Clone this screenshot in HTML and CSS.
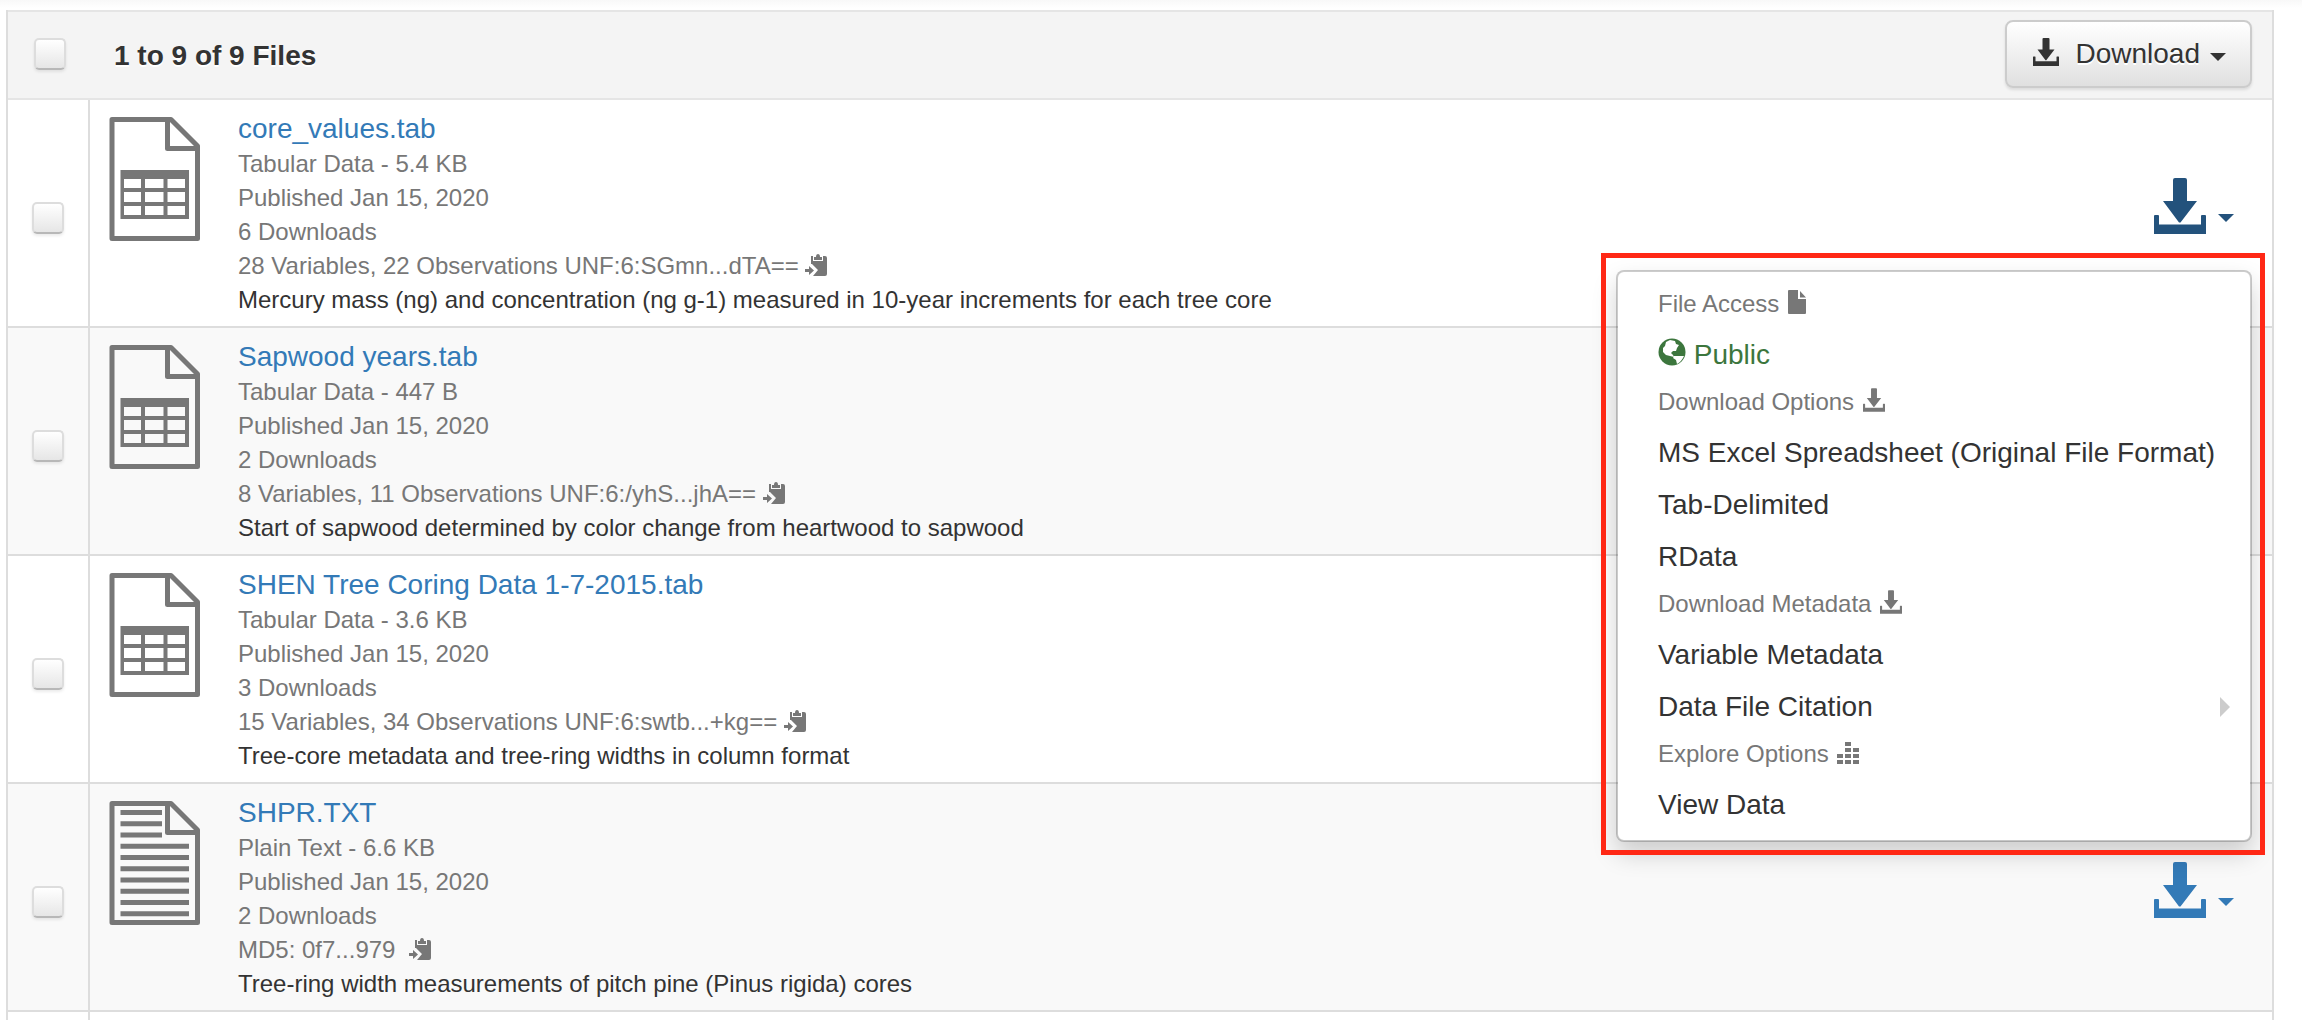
FILE: index.html
```
<!DOCTYPE html>
<html lang="en">
<head>
<meta charset="utf-8">
<title>Dataset files</title>
<link rel="stylesheet" href="styles.css">
</head>
<body>
<svg class="sprite" aria-hidden="true">
  <symbol id="page" viewBox="0 0 94 126">
    <path fill="none" stroke="currentColor" stroke-width="5" stroke-linejoin="round" d="M4 3.500H63L89.500 30V122.500H4ZM59.500 3.500V32.500H89.500"/>
  </symbol>
  <symbol id="tabular" viewBox="0 0 94 126">
    <use href="#page"/>
    <path fill="currentColor" fill-rule="evenodd" d="M12.500 54H81V103H12.500ZM16 63V72H33V63ZM37 63V72H55.500V63ZM59.500 63V72H77V63ZM16 76V86H33V76ZM37 76V86H55.500V76ZM59.500 76V86H77V76ZM16 90V99H33V90ZM37 90V99H55.500V90ZM59.500 90V99H77V90Z"/>
  </symbol>
  <symbol id="text" viewBox="0 0 94 126">
    <use href="#page"/>
    <path fill="none" stroke="currentColor" stroke-width="5" d="M12.500 12.500H54M12.500 23.800H54M12.500 35H54M12.500 46.300H81M12.500 57.500H81M12.500 68.800H81M12.500 80H81M12.500 91.300H81M12.500 102.500H81M12.500 113.800H81"/>
  </symbol>
  <symbol id="save" viewBox="0 0 52 56">
    <path fill="currentColor" d="M21 0H31Q33 0 33 2V23H43L26.500 44.500H25L9 23H19V2Q19 0 21 0ZM1 37H4Q5 37 5 38V46.500H47V38Q47 37 48 37H51Q52 37 52 38V56H0V38Q0 37 1 37Z"/>
  </symbol>
  <symbol id="copy" viewBox="0 0 22 24">
    <path fill="currentColor" d="M6 3H8V8H18V3H20Q22 3 22 5V21Q22 23 20 23H8L13 17L7 11H6ZM9 4H11Q11 1 13 1Q15 1 15 4H17V7H9ZM0 16H4V13L9 17.500L4 22V19H0Z"/>
  </symbol>
</svg>

<main class="files">
  <table class="file-table">
    <thead>
      <tr>
        <th class="check"><input type="checkbox" aria-label="Select all files"></th>
        <th class="count">1 to 9 of 9 Files</th>
        <th class="bulk"><button class="download" type="button"><svg class="icon-download"><use href="#save"/></svg>Download<span class="caret"></span></button></th>
      </tr>
    </thead>
    <tbody>
      <tr>
        <td class="check"><input type="checkbox" aria-label="Select core_values.tab"></td>
        <td class="file"><div class="entry">
          <svg class="thumb"><use href="#tabular"/></svg>
          <div class="info">
            <a class="name" href="#core">core_values.tab</a>
            <p>Tabular Data - 5.4 KB</p>
            <p>Published Jan 15, 2020</p>
            <p>6 Downloads</p>
            <p>28 Variables, 22 Observations UNF:6:SGmn...dTA== <svg class="icon-copy"><use href="#copy"/></svg></p>
            <p class="note">Mercury mass (ng) and concentration (ng g-1) measured in 10-year increments for each tree core</p>
          </div>
        </div></td>
        <td class="action"><div class="access">
          <button class="open" type="button" aria-label="Access core_values.tab" aria-expanded="true"><svg class="icon-save"><use href="#save"/></svg><span class="caret"></span></button>
          <ul class="menu">
            <li class="heading">File Access <svg class="icon-file" viewBox="0 0 18 24"><path fill="currentColor" d="M1 0H10V9H18V23Q18 24 17 24H1Q0 24 0 23V1Q0 0 1 0ZM12 1L18 7.500H12Z"/></svg></li>
            <li class="public"><svg class="icon-globe" viewBox="0 0 28 28"><circle cx="14" cy="14" r="13.500" fill="currentColor"/><path fill="#fff" d="M8 4L12 2L17 3L18 6L21 7L19 10L18 13L15 13L13 15L15 17L16 19L12 18L8 17L5 14L5 10L7 8ZM16 18L20 18L26 18Q24 23 19 26L18 22L15 20Z"/></svg> Public</li>
            <li class="heading">Download Options <svg class="icon-small"><use href="#save"/></svg></li>
            <li><a href="#excel">MS Excel Spreadsheet (Original File Format)</a></li>
            <li><a href="#tab">Tab-Delimited</a></li>
            <li><a href="#rdata">RData</a></li>
            <li class="heading">Download Metadata <svg class="icon-small"><use href="#save"/></svg></li>
            <li><a href="#variable">Variable Metadata</a></li>
            <li><a class="submenu" href="#citation">Data File Citation</a></li>
            <li class="heading">Explore Options <svg class="icon-bars" viewBox="0 0 22 22"><path fill="currentColor" d="M8 0h6v4h-6zM8 6h6v4h-6zM16 6h6v4h-6zM0 12h6v4h-6zM8 12h6v4h-6zM16 12h6v4h-6zM0 18h6v4h-6zM8 18h6v4h-6zM16 18h6v4h-6z"/></svg></li>
            <li><a href="#view">View Data</a></li>
          </ul>
        </div></td>
      </tr>
      <tr>
        <td class="check"><input type="checkbox" aria-label="Select Sapwood years.tab"></td>
        <td class="file"><div class="entry">
          <svg class="thumb"><use href="#tabular"/></svg>
          <div class="info">
            <a class="name" href="#sapwood">Sapwood years.tab</a>
            <p>Tabular Data - 447 B</p>
            <p>Published Jan 15, 2020</p>
            <p>2 Downloads</p>
            <p>8 Variables, 11 Observations UNF:6:/yhS...jhA== <svg class="icon-copy"><use href="#copy"/></svg></p>
            <p class="note">Start of sapwood determined by color change from heartwood to sapwood</p>
          </div>
        </div></td>
        <td class="action"><div class="access"><button type="button" aria-label="Access Sapwood years.tab"><svg class="icon-save"><use href="#save"/></svg><span class="caret"></span></button></div></td>
      </tr>
      <tr>
        <td class="check"><input type="checkbox" aria-label="Select SHEN Tree Coring Data"></td>
        <td class="file"><div class="entry">
          <svg class="thumb"><use href="#tabular"/></svg>
          <div class="info">
            <a class="name" href="#shen">SHEN Tree Coring Data 1-7-2015.tab</a>
            <p>Tabular Data - 3.6 KB</p>
            <p>Published Jan 15, 2020</p>
            <p>3 Downloads</p>
            <p>15 Variables, 34 Observations UNF:6:swtb...+kg== <svg class="icon-copy"><use href="#copy"/></svg></p>
            <p class="note">Tree-core metadata and tree-ring widths in column format</p>
          </div>
        </div></td>
        <td class="action"><div class="access"><button type="button" aria-label="Access SHEN Tree Coring Data"><svg class="icon-save"><use href="#save"/></svg><span class="caret"></span></button></div></td>
      </tr>
      <tr>
        <td class="check"><input type="checkbox" aria-label="Select SHPR.TXT"></td>
        <td class="file"><div class="entry">
          <svg class="thumb"><use href="#text"/></svg>
          <div class="info">
            <a class="name" href="#shpr">SHPR.TXT</a>
            <p>Plain Text - 6.6 KB</p>
            <p>Published Jan 15, 2020</p>
            <p>2 Downloads</p>
            <p>MD5: 0f7...979 &nbsp;<svg class="icon-copy"><use href="#copy"/></svg></p>
            <p class="note">Tree-ring width measurements of pitch pine (Pinus rigida) cores</p>
          </div>
        </div></td>
        <td class="action"><div class="access"><button type="button" aria-label="Access SHPR.TXT"><svg class="icon-save"><use href="#save"/></svg><span class="caret"></span></button></div></td>
      </tr>
      <tr class="next"><td class="check"></td><td></td><td></td></tr>
    </tbody>
  </table>
</main>
</body>
</html>
```
FILE: styles.css
```
* { box-sizing: border-box; }
body {
  margin: 0;
  background: linear-gradient(#f8f8f8, #fff 8px) no-repeat #fff;
  color: #333;
  font: 28px/40px "Liberation Sans", Arial, sans-serif;
}
.sprite { position: absolute; width: 0; height: 0; }
.files { padding: 10px 28px 0 6px; }
p, ul { margin: 0; padding: 0; }
a { color: #337ab7; text-decoration: none; }
svg { flex: none; }

.file-table {
  width: 100%;
  border: solid #ddd;
  border-width: 0 2px;
  border-spacing: 0;
}
th, td { padding: 0; text-align: left; vertical-align: middle; }
th {
  height: 90px;
  background: #f4f4f4;
  border: solid #e5e5e5;
  border-width: 2px 0;
  text-shadow: 0 2px 0 #fff;
}
td { border-bottom: 2px solid #ddd; }
tbody tr:nth-child(even) { background: #f9f9f9; }
.check { width: 82px; padding-left: 24px; }
td.check { border-right: 2px solid #ddd; }
th.check { padding-left: 26px; }
.count { padding: 2px 0 0 24px; }
.bulk { padding: 0 20px 2px 0; text-align: right; }
.next td { height: 8px; border-bottom: 0; }

input[type="checkbox"] {
  appearance: none;
  display: block;
  width: 32px;
  height: 32px;
  margin: 0;
  border: 2px solid #ddd;
  border-bottom-color: #b8b8b8;
  border-radius: 5px;
  background: linear-gradient(#fff, #e6e6e6);
  box-shadow: 0 2px 3px rgba(0, 0, 0, .08);
}
th input[type="checkbox"] { margin-bottom: 2px; }
td input[type="checkbox"] { margin-top: 10px; }

button {
  display: inline-flex;
  align-items: center;
  padding: 0;
  border: 0;
  background: none;
  color: #337ab7;
  font: inherit;
}
.caret {
  border: solid transparent;
  border-width: 8px 8px 0;
  border-top-color: currentColor;
}
.download {
  height: 68px;
  padding: 0 24px 0 26px;
  border: 2px solid #ccc;
  border-radius: 8px;
  background: linear-gradient(#fff, #e0e0e0);
  box-shadow: 0 2px 3px rgba(0, 0, 0, .1);
  color: #333;
  font-weight: normal;
  text-shadow: 0 2px 0 #fff;
  vertical-align: middle;
}
.icon-download { width: 26px; height: 28px; margin: 0 16px 4px 0; }
.download .caret { margin: 6px 0 0 10px; }

.entry { display: flex; gap: 36px; padding: 9px 0 9px 18px; }
.thumb { width: 94px; height: 126px; margin-top: 7px; color: #777; }
.name { display: block; margin-bottom: -2px; }
.info p { color: #777; font-size: 24px; line-height: 34px; }
.info .note { color: #333; }
.icon-copy { width: 22px; height: 24px; vertical-align: -3px; }

.action { width: 120px; padding-right: 38px; }
.access { position: relative; display: flex; justify-content: flex-end; }
.access button { gap: 12px; padding-bottom: 14px; }
.access .open { color: #23527c; }
.access .caret { margin-top: 24px; }
.icon-save { width: 52px; height: 56px; }

.menu {
  position: absolute;
  z-index: 2;
  top: calc(100% + 22px);
  right: -18px;
  min-width: 636px;
  padding: 10px 0;
  border: 2px solid rgba(0, 0, 0, .2);
  border-radius: 8px;
  background: #fff;
  background-clip: padding-box;
  box-shadow: 0 12px 24px rgba(0, 0, 0, .175);
  list-style: none;
  white-space: nowrap;
}
.menu::after {
  content: "";
  position: absolute;
  inset: -19px -15px -15px -17px;
  border: 5px solid #ff2815;
  pointer-events: none;
}
.menu li { padding: 7px 20px 5px 40px; }
.menu a { display: block; color: #333; }
.menu .heading { padding: 5px 20px 7px 40px; color: #777; font-size: 24px; line-height: 34px; }
.menu .public { color: #3c763d; }
.menu .submenu { display: flex; align-items: center; justify-content: space-between; }
.submenu::after {
  content: "";
  border: solid transparent;
  border-width: 10px 0 10px 10px;
  border-left-color: #ccc;
}
.heading svg { margin-left: 2px; }
.icon-file { width: 18px; height: 24px; vertical-align: -2px; }
.icon-globe { width: 28px; height: 28px; vertical-align: -2px; }
.icon-small { width: 22px; height: 24px; vertical-align: -2px; }
.icon-bars { width: 22px; height: 22px; vertical-align: -2px; }
```
